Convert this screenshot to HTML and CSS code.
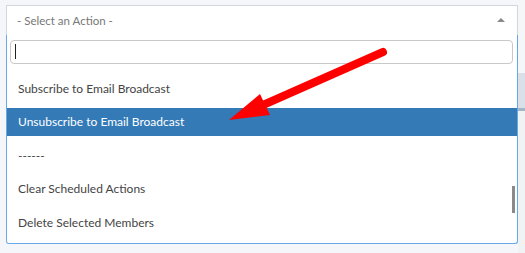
FILE: index.html
```html
<!DOCTYPE html>
<html lang="en">
<head>
    <meta charset="UTF-8">
    <title>Bulk Actions</title>
    <link rel="stylesheet" href="styles.css">
</head>
<body>
    <div class="page">
        <!--下拉选择框-->
        <div class="widget">
            <div class="select">
                <span class="select-text">- Select an Action -</span>
                <span class="select-arrow"></span>
            </div>
            <div class="dropdown">
                <div class="search"><span class="caret"></span></div>
                <ul class="results">
                    <li>Subscribe to Email Broadcast</li>
                    <li class="active">Unsubscribe to Email Broadcast</li>
                    <li>------</li>
                    <li>Clear Scheduled Actions</li>
                    <li>Delete Selected Members</li>
                </ul>
                <div class="thumb"></div>
            </div>
        </div>
        <!--后面的表格露出的一条-->
        <div class="backdrop">
            <div class="band-top"></div>
            <div class="band-head"></div>
            <div class="band-line"></div>
            <div class="band-rest"></div>
        </div>
        <!--红色箭头标注-->
        <svg class="arrow" width="525" height="253" viewBox="0 0 525 253">
            <line x1="383" y1="52" x2="263" y2="105" stroke="#ff0000" stroke-width="8" stroke-linecap="round"/>
            <polygon points="229,120 260,94 270,115" fill="#ff0000"/>
        </svg>
    </div>
</body>
</html>
```

FILE: styles.css
```css
*{
    margin: 0;
    padding: 0;
    box-sizing: border-box;
}
body{
    background-color: #f4f6f9;
    font-family: "Source Sans Pro", Lato, "Noto Sans", sans-serif;
    font-size: 12px;
    color: #444;
}
.page{
    position: relative;
    display: flex;
    height: 253px;
    overflow: hidden;
}
.widget{
    width: 512px;
    margin: 5px 0 0 6px;
}
.select{
    height: 30px;
    background-color: #fff;
    border: 1px solid #d2d6de;
    border-bottom: none;
    display: flex;
    align-items: center;
    justify-content: space-between;
    padding: 0 12px 0 10px;
}
.select-text{
    color: #777;
    font-size: 11.5px;
}
.select-arrow{
    width: 0;
    height: 0;
    border-left: 4px solid transparent;
    border-right: 4px solid transparent;
    border-bottom: 4px solid #888;
    margin-top: -1px;
}
.dropdown{
    position: relative;
    height: 209px;
    background-color: #fff;
    border: 1px solid #68a8e6;
    border-top: none;
    border-radius: 0 0 3px 3px;
    padding: 5px 4px 0 3px;
}
.search{
    height: 24px;
    border: 1px solid #c9c9c9;
    border-radius: 4px;
    padding: 3px 4px;
}
.caret{
    display: block;
    width: 1px;
    height: 15px;
    background-color: #222;
}
.results{
    list-style: none;
    margin: 11px -4px 0 -3px;
}
.results li{
    height: 28px;
    line-height: 28px;
    padding-left: 11px;
    margin-bottom: 5.4px;
    white-space: nowrap;
}
.results li.active{
    background-color: #337ab7;
    color: #fff;
}
/*滚动条*/
.thumb{
    position: absolute;
    right: 2px;
    top: 151px;
    width: 3px;
    height: 27px;
    background-color: #8a8a8a;
}
.backdrop{
    flex: 1;
    display: flex;
    flex-direction: column;
}
.band-top{
    height: 73px;
    background-color: #f5f6f8;
}
.band-head{
    height: 35px;
    background-color: #d9e0e8;
}
.band-line{
    height: 3px;
    background-color: #a5b6cb;
}
.band-rest{
    flex: 1;
    background-color: #f1f2f4;
}
.arrow{
    position: absolute;
    left: 0;
    top: 0;
}
```
